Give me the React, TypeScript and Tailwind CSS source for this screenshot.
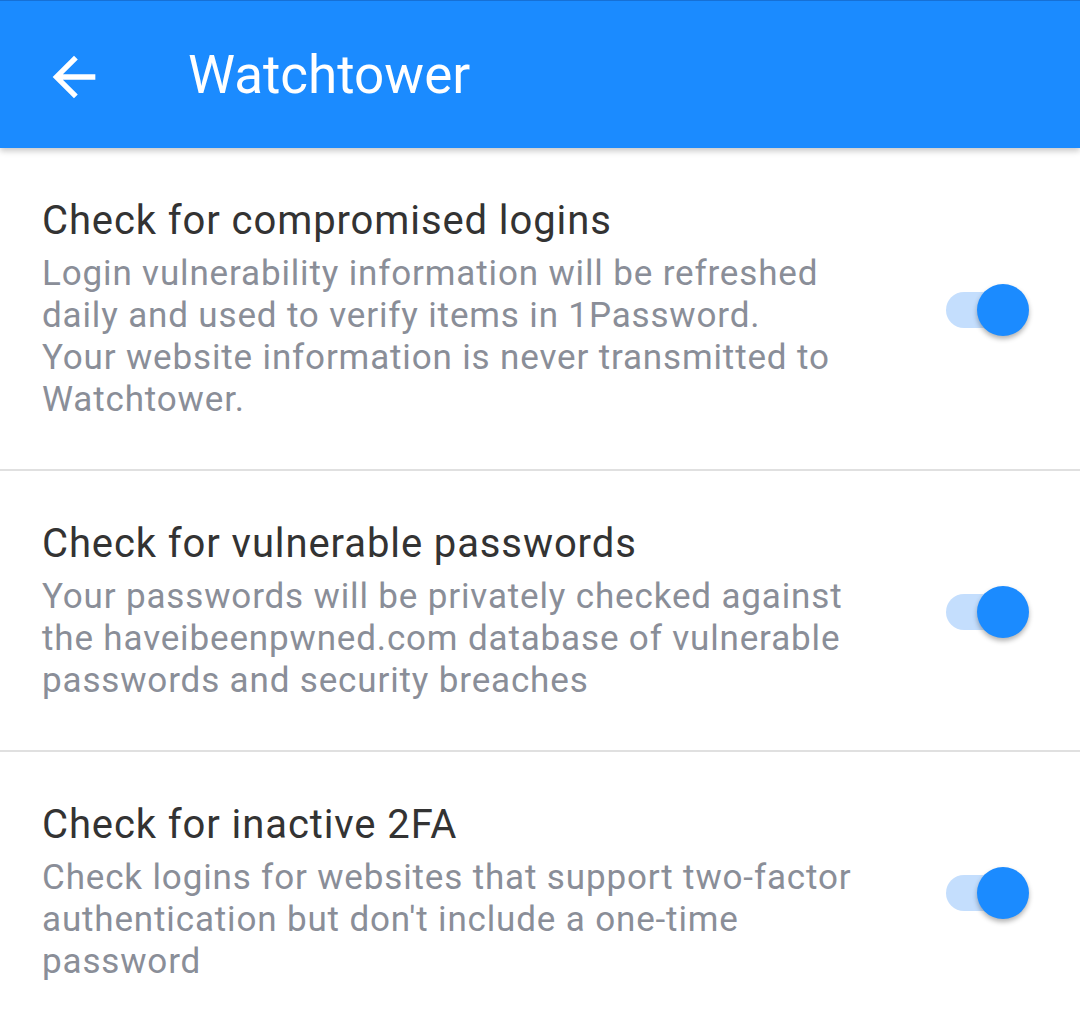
const settings = [
  {
    title: 'Check for compromised logins',
    lines: [
      'Login vulnerability information will be refreshed',
      'daily and used to verify items in 1Password.',
      'Your website information is never transmitted to',
      'Watchtower.',
    ],
  },
  {
    title: 'Check for vulnerable passwords',
    lines: [
      'Your passwords will be privately checked against',
      'the haveibeenpwned.com database of vulnerable',
      'passwords and security breaches',
    ],
  },
  {
    title: 'Check for inactive 2FA',
    lines: [
      'Check logins for websites that support two-factor',
      "authentication but don't include a one-time",
      'password',
    ],
  },
]

function Toggle() {
  return (
    <div className="relative w-[83px] h-[52px] shrink-0">
      <div className="absolute left-0 top-[8px] w-[72px] h-[36px] rounded-full bg-[#c4defd]" />
      <div className="absolute right-0 top-0 size-[52px] rounded-full bg-[#1b8bff] shadow-[0_3px_5px_rgba(0,0,0,0.3)]" />
    </div>
  )
}

export default function App() {
  return (
    <div className="w-[1080px] h-[1027px] overflow-hidden bg-white font-['Roboto',sans-serif]">
      <header className="relative z-10 h-[148px] flex items-center bg-[#1b8bff] border-t border-[#1670d6] shadow-[0_3px_6px_rgba(0,0,0,0.22)]">
        <button className="ml-[42px] mt-[4px] size-[64px] flex items-center justify-center text-white">
          <svg viewBox="0 0 24 24" className="size-[64px]" fill="currentColor">
            <path d="M20 11H7.83l5.59-5.59L12 4l-8 8 8 8 1.41-1.41L7.83 13H20v-2z" />
          </svg>
        </button>
        <h1 className="ml-[82px] mt-[2px] text-[53px] leading-none text-white">Watchtower</h1>
      </header>
      <div>
        {settings.map((s, i) => (
          <div
            key={s.title}
            className={`flex items-center pl-[42px] pr-[51px] pt-[51px] pb-[48px] ${
              i < settings.length - 1 ? 'border-b-2 border-[#e0e0e0]' : ''
            }`}
          >
            <div className="flex-1">
              <h2 className="text-[40px] leading-[44px] tracking-[0.9px] text-[#333333]">{s.title}</h2>
              <p className="mt-[10px] text-[35px] leading-[42px] tracking-[0.85px] text-[#8a8e98]">
                {s.lines.map(line => (
                  <span key={line} className="block whitespace-nowrap">
                    {line}
                  </span>
                ))}
              </p>
            </div>
            <Toggle />
          </div>
        ))}
      </div>
    </div>
  )
}
